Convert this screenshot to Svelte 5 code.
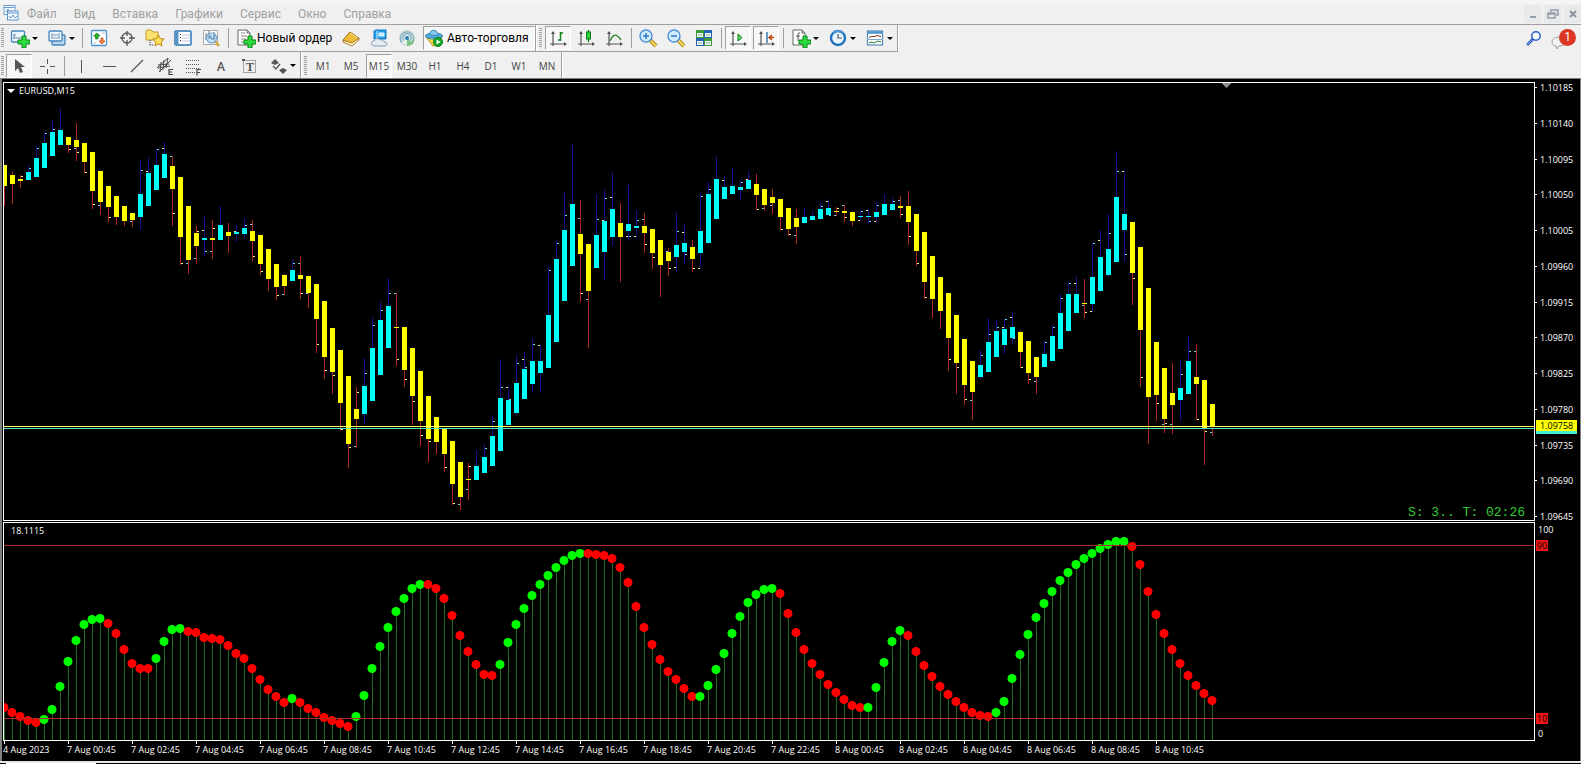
<script>
    const menu = ["Файл", "Вид", "Вставка", "Графики", "Сервис", "Окно", "Справка"];
    const timeframes = ["M1", "M5", "M15", "M30", "H1", "H4", "D1", "W1", "MN"];
    const prices = ["1.10185", "1.10140", "1.10095", "1.10050", "1.10005", "1.09960", "1.09915", "1.09870", "1.09825", "1.09780", "1.09735", "1.09690", "1.09645"];
    const times = [
        "4 Aug 2023", "7 Aug 00:45", "7 Aug 02:45", "7 Aug 04:45", "7 Aug 06:45", "7 Aug 08:45", "7 Aug 10:45",
        "7 Aug 12:45", "7 Aug 14:45", "7 Aug 16:45", "7 Aug 18:45", "7 Aug 20:45", "7 Aug 22:45", "8 Aug 00:45",
        "8 Aug 02:45", "8 Aug 04:45", "8 Aug 06:45", "8 Aug 08:45", "8 Aug 10:45"
    ];

    // distance between two bars
    const step = 8;

    // [up, high, body top, body bottom, low, open tick, close tick], 0 = no tick
    const candles = [
        [0,165,165,186,206,0,0],[0,171,175,184,204,0,0],[0,175,179,181,188,0,176],[1,165,172,180,180,0,168],
        [1,146,158,177,177,0,148],[1,132,143,168,168,0,133],[1,121,132,156,156,0,129],[1,108,130,145,145,0,0],
        [0,137,137,145,153,0,149],[0,123,140,147,161,148,152],[0,143,143,162,173,0,172],[0,152,152,191,209,0,204],
        [0,171,171,202,215,205,0],[0,186,186,207,222,0,217],[0,196,196,217,225,0,0],[0,206,206,221,226,0,0],
        [0,213,213,220,227,221,0],[1,160,194,217,230,0,170],[1,157,173,206,206,171,0],[1,149,165,190,190,0,149],
        [1,142,154,178,178,148,0],[0,156,166,189,226,156,213],[0,177,177,237,265,0,263],[0,206,206,260,274,263,0],
        [0,226,233,246,264,258,231],[1,217,238,240,256,230,251],[0,220,238,240,259,251,228],[1,206,225,240,240,0,0],
        [0,223,232,236,253,0,0],[1,225,232,234,242,231,0],[1,218,228,234,239,0,225],[0,220,231,241,261,224,256],
        [0,235,235,264,275,0,271],[0,249,249,279,291,0,0],[0,264,264,287,300,0,295],[0,274,275,286,295,294,0],
        [1,259,270,281,281,0,263],[0,256,275,279,299,263,293],[0,276,276,293,308,293,0],[0,284,284,319,353,0,344],
        [0,301,301,357,379,0,370],[0,328,328,372,394,0,375],[0,350,350,403,431,0,429],[0,376,376,444,468,0,447],
        [0,387,409,419,448,446,392],[1,358,386,414,424,0,373],[1,317,348,401,401,0,325],[1,301,320,375,375,0,310],
        [1,278,306,348,348,0,293],[0,293,327,328,366,293,359],[0,327,327,370,387,0,379],[0,348,348,396,425,0,401],
        [0,371,371,421,446,0,435],[0,396,396,439,462,0,441],[0,417,417,442,454,0,0],[0,429,429,454,472,0,467],
        [0,441,441,484,505,0,503],[0,462,462,497,510,504,0],[0,463,479,480,500,489,466],[1,450,466,480,480,0,0],
        [1,444,457,473,473,0,448],[1,415,436,466,466,0,421],[1,359,398,451,451,0,387],[1,387,400,425,425,387,399],
        [1,355,383,413,415,0,363],[1,352,369,399,399,359,367],[1,338,361,384,393,0,344],[1,345,361,373,393,345,0],
        [1,266,315,368,368,0,270],[1,241,259,342,342,0,243],[1,193,230,301,301,0,215],[1,145,204,266,266,0,0],
        [0,200,234,254,302,218,293],[0,244,244,291,348,299,0],[1,194,235,268,268,0,219],[1,189,221,252,280,220,198],
        [1,172,209,237,246,197,0],[0,203,223,237,282,0,0],[1,185,224,231,241,236,236],[1,210,226,228,237,236,220],
        [0,213,226,233,253,219,244],[0,229,229,253,269,0,257],[0,240,240,265,297,0,0],[0,248,252,261,276,251,268],
        [1,212,245,257,272,267,231],[1,225,243,252,264,232,254],[0,240,247,259,272,0,268],[1,193,231,253,268,268,196],
        [1,182,194,243,243,0,189],[1,156,179,219,219,0,0],[1,176,187,199,199,180,0],[1,168,186,194,194,0,0],
        [1,180,187,190,199,0,182],[1,171,180,189,189,179,0],[0,174,184,195,210,0,209],[0,189,189,205,211,208,0],
        [0,189,197,203,214,205,0],[0,199,199,217,230,0,229],[0,208,208,229,236,0,234],[0,209,218,227,244,235,0],
        [1,208,217,223,223,0,0],[1,211,216,220,220,0,0],[1,202,209,219,219,0,206],[1,199,208,215,215,201,215],
        [0,207,211,212,216,215,208],[0,205,211,213,222,205,217],[0,212,212,221,226,0,0],[1,210,216,217,221,220,211],
        [1,209,216,217,224,210,221],[1,202,212,217,222,221,205],[1,194,204,215,215,0,0],[1,197,204,210,210,0,201],
        [0,196,206,208,218,200,214],[0,191,206,222,245,0,236],[0,214,214,251,266,0,263],[0,232,232,282,299,0,297],
        [0,256,256,299,318,0,0],[0,277,277,311,329,0,0],[0,293,293,338,371,0,359],[0,315,315,363,394,0,367],
        [0,339,339,385,405,0,399],[0,361,361,392,420,400,0],[1,350,365,377,379,0,355],[1,318,342,372,372,0,334],
        [1,320,331,357,357,0,327],[1,319,329,345,354,327,319],[1,311,327,338,345,317,338],[0,331,332,352,368,0,367],
        [0,341,341,373,384,0,379],[0,357,357,377,394,381,0],[1,341,354,367,367,0,342],[1,325,336,361,361,0,327],
        [1,294,313,349,349,0,298],[1,282,294,331,331,0,283],[1,276,294,313,313,283,0],[0,279,303,304,318,305,312],
        [1,243,277,304,312,311,243],[1,230,257,291,291,240,0],[1,214,249,275,277,0,233],[1,151,197,262,262,0,171],
        [1,171,214,230,262,171,254],[0,222,222,273,305,0,278],[0,247,247,330,387,0,377],[0,288,288,397,444,0,0],
        [0,342,342,395,421,0,403],[0,368,368,419,433,424,423],[0,363,393,405,434,424,0],[1,360,388,400,421,0,374],
        [1,336,361,394,394,0,351],[0,344,377,384,420,351,419],[0,380,380,428,465,0,431],[0,404,404,426,436,432,0]
    ];

    const wave = [
        707,712,716,720,722,719,709,686,661,640,624,619,618,623,633,649,663,668,668,658,641,629,628,631,632,637,638,639,
        645,653,658,668,679,689,696,702,698,702,708,712,717,720,723,726,716,695,668,646,627,611,598,588,584,584,588,598,
        615,635,651,664,674,675,664,642,624,608,595,584,575,567,560,555,553,553,554,555,558,567,582,606,627,644,659,671,
        679,688,696,696,685,669,653,633,616,602,594,589,588,593,613,632,649,663,674,684,692,699,705,707,707,687,662,641,
        630,635,651,665,676,686,694,701,707,712,715,716,712,701,678,654,634,617,603,591,580,572,564,558,553,548,544,541,
        541,546,564,591,614,633,649,663,675,685,693,700
    ];
    const rising = [[5, 12], [19, 22], [36, 36], [44, 52], [62, 72], [87, 96], [108, 112], [124, 140]];
    const isRising = (i) => rising.some(([from, to]) => i >= from && i <= to);

    const axes = '<path d="M5 4v14M2 16h16" stroke="#555" stroke-width="1.2" fill="none"/><path d="M3 6l2-3 2 3zM16 14l3 2-3 2z" fill="#555"/>';
    const plus = '<path d="M12 8h4v4h4v4h-4v4h-4v-4H8v-4h4z" fill="#2edb3c" stroke="#08851a"/>';
    const lens = '<path d="M12 12l6 6" stroke="#b88a1c" stroke-width="4"/><path d="M12 12l6 6" stroke="#f6d765" stroke-width="2"/><circle cx="8" cy="8" r="6" fill="#d3edff" stroke="#4a8fd6" stroke-width="1.4"/>';
    const sheet = '<path d="M2 2h9l3 3v12H2z" fill="#fff" stroke="#666"/><path d="M11 2v3h3" fill="none" stroke="#666"/>';

    const icons = {
        app: '<rect x="3" y="1.500" width="11" height="9" fill="#f4faff" stroke="#6c9fd0"/><path d="M3 3.500h11M5 8l2-3 2 3 2-2" fill="none" stroke="#6c9fd0"/><rect x="6.500" y="7" width="10.500" height="9" fill="#f4faff" stroke="#5f94c9"/><path d="M6 9h11M8 12l2 2 2-3 2 3 2-2" fill="none" stroke="#5f94c9"/>',
        newChart: '<rect x="1.500" y="3" width="13" height="11" rx="1" fill="#eef7ff" stroke="#4687bd" stroke-width="1.300"/><path d="M4 6v5M3 10h9M4 7h2" stroke="#6a8aa8" fill="none"/>' + plus,
        profiles: '<rect x="5" y="7" width="13" height="10" rx="1" fill="#b9d8f0" stroke="#4687bd" stroke-width="1.300"/><rect x="2" y="3" width="13" height="10" rx="1" fill="#eef7ff" stroke="#4687bd" stroke-width="1.300"/><path d="M5 5v5M12 5v5M4 10h9M5 7h6" stroke="#7c9ab5" fill="none"/>',
        market: '<rect x="2.500" y="2.500" width="15" height="15" rx="1" fill="#fff" stroke="#4b95d1" stroke-width="1.300"/><path d="M8 5l3 3H9v3H6.500V8H4.500z" fill="#24b52d" stroke="#087a12" stroke-width=".7"/><path d="M13 16l3-3h-2v-3h-2v3h-2z" fill="#ff934c" stroke="#c84410" stroke-width=".8"/><path d="M13 5h3M4 15h3" stroke="#bbb"/>',
        target: '<circle cx="10" cy="10" r="5" fill="none" stroke="#555" stroke-width="1.300"/><path d="M10 3v5M10 12v6M3 10h5M12 10h6" stroke="#555" stroke-width="1.300"/>',
        navigator: '<path d="M1 3l1-1h4l2 2h5v8H1z" fill="#f9e26d" stroke="#c29b26"/><path d="M5 12v6M5 17h4" stroke="#333" stroke-dasharray="1 1"/><path d="M13.500 7l1.700 3.600 4 .5-3 2.800.8 4-3.500-2-3.600 2 .8-4-3-2.800 4-.5z" fill="#ffdf57" stroke="#b98918"/>',
        terminal: '<rect x="2" y="3" width="16" height="14" rx="1" fill="#fff" stroke="#2d74b2" stroke-width="1.500"/><path d="M4 3v14" stroke="#5795c8" stroke-width="3"/><path d="M9 7h8M9 10h8M9 13h8" stroke="#b8c5dd"/><path d="M7.500 6v9" stroke="#222" stroke-dasharray="1 2"/>',
        tester: '<path d="M2.500 2.500h14v14h-14z" fill="#fff" stroke="#a6a6a6"/><path d="M5 5v7M8 3v6M13 4v8" stroke="#666"/><path d="M14 13l4 5" stroke="#d8a73c" stroke-width="2.500"/><circle cx="10.500" cy="10" r="5" fill="#b8dcf6" fill-opacity=".8" stroke="#6f9fc8" stroke-width="1.200"/><path d="M8 11V8h2v3h3V7" stroke="#5380a8" fill="none"/>',
        order: sheet + '<path d="M5 5h4M5 8h6M5 11h5M5 14h3" stroke="#888"/>' + plus,
        book: '<path d="M2 12L9 4l9 6-7 7z" fill="#efbb3a" stroke="#94620e"/><path d="M2 12l9 3 7-5v2l-7 6-9-4z" fill="#fff0bd" stroke="#94620e" stroke-width=".8"/><path d="M9 5l8 5" stroke="#ffe694"/>',
        cloud: '<path d="M5 3l2-1h10v9H5z" fill="#20a3ef" stroke="#1173bd"/><path d="M8 3v8M10 5h5v3h-5z" fill="#c9edff" stroke="#e2f5ff"/><path d="M5 18c-4-1-3-5 0-5 1-3 5-3 6-1 4-1 4 1 4 2 4 0 4 4 0 4z" fill="#e5ebf3" stroke="#8797b4"/>',
        signal: '<circle cx="10" cy="10" r="7.500" fill="#e2eee7" stroke="#c2d0d3"/><path d="M5 14.500a6.500 6.500 0 1 1 10 0M7 12.500a4 4 0 1 1 6 0" stroke="#7aa8c0" stroke-width="1.200" fill="none"/><path d="M10 9v9c6 0 8-4 7-9a7 7 0 0 1-3 5z" fill="#7cc086"/><circle cx="10" cy="10" r="2" fill="#277eb7"/>',
        auto: '<path d="M2 9l7 9c4 0 8-4 9-9z" fill="#f4d748" stroke="#be991d"/><ellipse cx="10" cy="8" rx="8.500" ry="3" fill="#51a9d8" stroke="#3182ae"/><path d="M6 6c0-5 7-5 8 0 0 2-8 2-8 0z" fill="#86c9ec" stroke="#3a8ab5"/><circle cx="14" cy="14" r="4.500" fill="#16aa24" stroke="#078010"/><path d="M12.500 11.500v5l4-2.500z" fill="#fff"/>',
        bars: axes + '<path d="M12.500 4v9M13 5h2M10 12h2" stroke="#16831c" stroke-width="1.500" fill="none"/>',
        candles: axes + '<path d="M12.500 2v12" stroke="#087b13" stroke-width="1.300"/><rect x="10.500" y="4" width="4" height="7" fill="#2bd83a" stroke="#087b13"/>',
        line: axes + '<path d="M6 13c3-7 6-8 11-1" stroke="#2a8a30" stroke-width="1.300" fill="none"/>',
        zoomIn: lens + '<path d="M8 5v6M5 8h6" stroke="#2d7cc8" stroke-width="1.600"/>',
        zoomOut: lens + '<path d="M5 8h6" stroke="#2d7cc8" stroke-width="1.600"/>',
        tile: '<path d="M2 2h8v8H2zM10 10h8v8h-8z" fill="#3d9a35"/><path d="M10 2h8v8h-8zM2 10h8v8H2z" fill="#2562b4"/><path d="M3 5h6v4H3zM11 5h6v4h-6zM3 13h6v4H3zM11 13h6v4h-6z" fill="#f1f7ff"/><path d="M4 7h4M12 7h4M4 15h4M12 15h4" stroke="#8ab18f"/>',
        scroll: axes + '<path d="M10 6l4 3.500-4 3.500z" fill="#5be061" stroke="#0b7b15"/>',
        shift: axes + '<path d="M11 4v11" stroke="#1c68a8" stroke-width="1.300"/><path d="M18 9.500h-5M16 7l-3 2.500 3 2.500" stroke="#b5400e" stroke-width="1.300" fill="none"/>',
        indicators: sheet + '<path d="M9 5q-2-1-2 2v6M5 8h4" stroke="#555" fill="none"/>' + plus,
        clock: '<circle cx="10" cy="10" r="7" fill="#eaf6ff" stroke="#2474bd" stroke-width="2.400"/><path d="M10 6v4h4" stroke="#555" stroke-width="1.200" fill="none"/><path d="M5 5a7 7 0 0 1 10 0" stroke="#71b5ea" fill="none"/>',
        templates: '<rect x="2.500" y="3" width="15" height="14" fill="#fff" stroke="#5189b8" stroke-width="1.200"/><path d="M2 4.500h16" stroke="#4d94cf" stroke-width="2.500"/><path d="M4 9.500l3-1h3l2-1 4 1" stroke="#8a3226" fill="none"/><path d="M2 11.500h16" stroke="#83a9c8"/><path d="M4 15l3-1 2 1 4-2 3 1" stroke="#257e32" fill="none"/>',
        cursor: '<path d="M6 3v12l3-3 2 5 3-1-2-5h4z" fill="#555"/>',
        cross: '<path d="M10.500 3v5M10.500 13v5M3 10.500h5M13 10.500h5" stroke="#555"/>',
        vertical: '<path d="M10.500 4v13" stroke="#555"/>',
        horizontal: '<path d="M4 10.500h13" stroke="#555"/>',
        trend: '<path d="M4 16L16 4" stroke="#555" stroke-width="1.200"/>',
        channel: '<path d="M2 12L13 2M4 16L16 4M3 9l11-1M3 12l12-2M6 6L5 16M9 4L8 14M13 2l-2 10" stroke="#4d4d4d"/><path d="M18 13.500h-4v5h4M14 16h3" stroke="#444" stroke-width="1.200" fill="none"/>',
        fibo: '<path d="M3 4.500h14M3 8.500h14M3 12.500h14M3 16.500h9" stroke="#555" stroke-dasharray="1 1"/><path d="M18 13.500h-4v6M14 16.500h3" stroke="#444" stroke-width="1.200" fill="none"/>',
        letter: '<text x="6" y="15" font-family="Open Sans, sans-serif" font-size="12" font-weight="600" fill="#555">A</text>',
        label: '<rect x="4.500" y="4.500" width="12" height="12" fill="none" stroke="#555" stroke-dasharray="1 1"/><path d="M3 3h3v2H3z" fill="#555"/><text x="7" y="15" font-family="Liberation Serif, serif" font-size="12" font-weight="700" fill="#555">T</text>',
        arrows: '<path d="M3 7l4-4 4 4-4 2zM11 14l4-2 4 2-4 4zM3 10l3 3" fill="#555"/><path d="M5 10l3 3 4-5" stroke="#555" stroke-width="1.300" fill="none"/>',
        search: '<circle cx="12" cy="7" r="4.200" fill="#f6faff" stroke="#2c62c4" stroke-width="1.500"/><path d="M9 10l-6 6" stroke="#2455b6" stroke-width="2.600"/><path d="M8 11l-5 5" stroke="#8fb3f0"/>'
    };

    const chartTools = ["market", "target", "navigator", "terminal", "tester"];
    const drawTools = ["vertical", "horizontal", "trend", "channel", "fibo", "letter", "label"];
</script>

{#snippet icon(name)}
    <svg class="icon" width="20" height="20" viewBox="0 0 20 20" aria-hidden="true">{@html icons[name]}</svg>
{/snippet}

{#snippet tool(name, pressed = false)}
    <button class="tool" class:pressed aria-label={name}>{@render icon(name)}</button>
{/snippet}

{#snippet dropdown(name)}
    <button class="tool dropdown" aria-label={name}>{@render icon(name)}<span class="caret"></span></button>
{/snippet}

<div class="terminal">
    <header class="menu-bar">
        {@render icon("app")}
        <nav>
            {#each menu as item}
                <a href="#menu">{item}</a>
            {/each}
        </nav>
        <div class="window-buttons">
            <button aria-label="minimize"><svg width="12" height="12"><path d="M3 9h6" stroke="#929da8" stroke-width="2" /></svg></button>
            <button aria-label="restore"><svg width="12" height="12"><path d="M4 4V2h7v5H9M1 5h7v5H1zM1 6h7" stroke="#929da8" stroke-width="1.500" fill="none" /></svg></button>
            <button aria-label="close"><svg width="12" height="12"><path d="M3 3l6 6M9 3l-6 6" stroke="#8a949e" stroke-width="2" /></svg></button>
        </div>
    </header>

    <div class="toolbar">
        <div class="group lined">
            <span class="grip"></span>
            {@render dropdown("newChart")}
            {@render dropdown("profiles")}
            <span class="separator"></span>
            {#each chartTools as name}
                {@render tool(name)}
            {/each}
            <span class="separator"></span>
            <button class="tool text-tool">{@render icon("order")}<span>Новый ордер</span></button>
            {@render tool("book")}
            {@render tool("cloud")}
            {@render tool("signal")}
            <button class="tool text-tool pressed auto">{@render icon("auto")}<span>Авто-торговля</span></button>
        </div>
        <div class="group lined">
            <span class="grip"></span>
            {@render tool("bars", true)}
            {@render tool("candles")}
            {@render tool("line")}
            <span class="separator"></span>
            {@render tool("zoomIn")}
            {@render tool("zoomOut")}
            {@render tool("tile")}
            <span class="separator"></span>
            {@render tool("scroll", true)}
            {@render tool("shift", true)}
            <span class="separator"></span>
            {@render dropdown("indicators")}
            {@render dropdown("clock")}
            {@render dropdown("templates")}
        </div>
        <div class="corner">
            {@render tool("search")}
            <button class="tool chat" aria-label="messages">
                <svg width="24" height="24" viewBox="0 0 24 24">
                    <path d="M9 10c-5 0-7 3-7 5s2 4 4 4l1 3 2-3c5 0 7-2 7-5" fill="#f3f3f3" stroke="#9b9b9b" />
                </svg>
                <span class="badge">1</span>
            </button>
        </div>
    </div>

    <div class="toolbar drawing">
        <div class="group">
            <span class="grip"></span>
            {@render tool("cursor", true)}
            {@render tool("cross")}
            <span class="separator"></span>
            {#each drawTools as name}
                {@render tool(name)}
            {/each}
            {@render dropdown("arrows")}
        </div>
        <div class="group">
            <span class="grip"></span>
            {#each timeframes as name}
                <button class="tool timeframe" class:pressed={name === "M15"}>{name}</button>
            {/each}
        </div>
    </div>

    <main class="charts">
        <section class="panel">
            <svg class="plot" height="437" aria-label="EURUSD">
                <g transform="translate(0 -83)" shape-rendering="crispEdges">
                    {#each candles as [up, high, top, bottom, low, open, close], i}
                        <g class={up ? "up" : "down"} transform={`translate(${i * step} 0)`}>
                            <rect class="wick" x="0" y={high} width="1" height={low - high} />
                            <rect class="body" x="-2" y={top} width="5" height={bottom - top} />
                            {#if open}<rect class="open" x="-2" y={open} width="2" height="1" />{/if}
                            {#if close}<rect class="close" x="1" y={close} width="2" height="1" />{/if}
                        </g>
                    {/each}
                    <rect class="bid" x="0" y="426" width="100%" height="1" />
                    <rect class="ask" x="0" y="428" width="100%" height="1" />
                    <path d="M1217 83h10l-5 5z" fill="#8c8c8c" />
                </g>
            </svg>
            <div class="chart-title"><span class="caret light"></span>EURUSD,M15</div>
            <div class="spread">S: 3.. T: 02:26</div>
        </section>
        <aside class="axis price-axis">
            {#each prices as price}
                <span>{price}</span>
            {/each}
            <b class="current">1.09758</b>
        </aside>

        <section class="panel">
            <svg class="plot" height="217" aria-label="Oscillator">
                <g transform="translate(0 -523)">
                    {#each wave as y, i}
                        <rect class="stem" x={i * step} {y} width="1" height={740 - y} shape-rendering="crispEdges" />
                        <circle cx={i * step} cy={y + 0.5} r="4.5" fill={isRising(i) ? "#00ff00" : "#ff0000"} />
                    {/each}
                    <rect class="level" x="0" y="545" width="100%" height="1" />
                    <rect class="level" x="0" y="718" width="100%" height="1" />
                </g>
            </svg>
            <div class="chart-title">18.1115</div>
        </section>
        <aside class="axis level-axis">
            <span>100</span>
            <b class="upper">90</b>
            <b class="lower">10</b>
            <span>0</span>
        </aside>

        <div class="time-axis">
            {#each times as time}
                <span>{time}</span>
            {/each}
        </div>
    </main>
    <footer><span></span></footer>
</div>

<style>
    :global(body) {
        background: #000;
    }

    .terminal {
        min-width: 1240px;
        overflow: hidden;
        background: #f0f0f0;
        font-family: Roboto, "Noto Sans", sans-serif;
        font-size: 12px;
        color: #000;
    }

    button {
        margin: 0;
        padding: 0;
        border: 0;
        background: none;
        font: inherit;
        color: inherit;
    }

    .icon {
        flex: none;
        display: block;
    }

    /* menu */
    .menu-bar {
        display: flex;
        align-items: center;
        height: 24px;
        padding: 4px 0 0 1px;
        box-sizing: border-box;
        background: linear-gradient(#f4f4f4 4px, #f0f0f0 4px);
    }

    nav {
        display: flex;
        gap: 17px;
        flex: 1;
        padding-left: 6px;
    }

    nav a {
        color: #a0a0a0;
        text-decoration: none;
        line-height: 18px;
    }

    .window-buttons {
        display: flex;
        gap: 3px;
    }

    .window-buttons button {
        display: flex;
        align-items: center;
        justify-content: center;
        width: 17px;
        height: 18px;
        background: #e8e9ea;
    }

    /* toolbars */
    .toolbar {
        display: flex;
        height: 27px;
        box-sizing: border-box;
        border-top: 1px solid #a0a0a0;
    }

    .drawing {
        border-top-color: transparent;
    }

    .drawing .group {
        padding-top: 1px;
    }

    .group {
        display: flex;
        align-items: center;
        border-right: 1px solid #a0a0a0;
        box-shadow: 1px 0 #fff;
    }

    .group.lined {
        box-shadow: 0 1px #a0a0a0, 1px 0 #fff;
    }

    .grip {
        width: 3px;
        height: 20px;
        margin: 0 2px 0 3px;
        background: repeating-linear-gradient(#a0a0a0 0 1px, #f0f0f0 1px 2px);
    }

    .group:first-child .grip {
        margin: 0 1px;
    }

    .separator {
        width: 1px;
        height: 20px;
        margin: 0 2px 0 3px;
        background: #a0a0a0;
    }

    .tool {
        display: flex;
        align-items: center;
        justify-content: center;
        width: 28px;
        height: 24px;
    }

    .pressed {
        width: 26px;
        margin: 0 1px;
        box-sizing: border-box;
        border: 1px solid #fff;
        border-top-color: #a0a0a0;
        border-left-color: #a0a0a0;
        background: #f7f7f7;
    }

    .dropdown {
        width: 37px;
        gap: 2px;
    }

    .text-tool {
        justify-content: flex-start;
        width: 106px;
        gap: 1px;
        padding-left: 5px;
        box-sizing: border-box;
        white-space: nowrap;
    }

    .auto {
        width: 112px;
        margin: 0 0 0 2px;
        padding: 0;
        gap: 3px;
    }

    .timeframe {
        font-family: "Open Sans", "Noto Sans", sans-serif;
        font-size: 10px;
        color: #444;
    }

    .caret {
        border: 3px solid transparent;
        border-top-color: #000;
        border-bottom-width: 0;
    }

    .caret.light {
        border-width: 4px 4px 0;
        border-top-color: #fff;
    }

    .corner {
        display: flex;
        align-items: center;
        margin-left: auto;
        padding: 2px 5px 0 0;
    }

    .chat {
        position: relative;
    }

    .badge {
        position: absolute;
        top: 2px;
        right: 0;
        width: 17px;
        height: 17px;
        border-radius: 50%;
        background: #dc3522;
        color: #fff;
        line-height: 17px;
        text-align: center;
    }

    /* charts */
    .charts {
        display: grid;
        grid-template-columns: minmax(0, 1fr) 45px;
        row-gap: 1px;
        padding: 3px 0 0 1px;
        border: solid #808080;
        border-width: 1px 1px 0 2px;
        background: #000;
        color: #fff;
        font-family: "Open Sans", "Noto Sans", sans-serif;
        font-size: 9px;
        line-height: 12px;
    }

    .panel {
        position: relative;
        border: 1px solid #fff;
    }

    .plot {
        display: block;
        width: 100%;
    }

    .up .wick {
        fill: #12128c;
    }

    .down .wick {
        fill: #a8281c;
    }

    .up .body {
        fill: #00ffff;
    }

    .down .body {
        fill: #ffff00;
    }

    .up .close,
    .down .open {
        fill: #6ed4e8;
    }

    .up .open,
    .down .close {
        fill: #ffec80;
    }

    .bid {
        fill: #ffff60;
    }

    .ask {
        fill: #48e0c8;
    }

    .stem {
        fill: #1c6c1c;
    }

    .level {
        fill: #b02828;
    }

    .chart-title {
        position: absolute;
        top: 2px;
        left: 7px;
        display: flex;
        align-items: center;
        gap: 4px;
    }

    .chart-title .caret {
        margin-left: -4px;
    }

    .spread {
        position: absolute;
        right: 9px;
        bottom: 0;
        font-family: "Liberation Mono", monospace;
        font-size: 13px;
        line-height: 14px;
        color: #32cd32;
    }

    .axis {
        position: relative;
        display: flex;
        flex-direction: column;
        justify-content: space-between;
    }

    .axis span {
        padding-left: 5px;
    }

    .price-axis {
        margin-bottom: -2px;
    }

    .price-axis span {
        background: linear-gradient(#fff, #fff) 0 5px / 2px 1px no-repeat;
    }

    .axis b {
        position: absolute;
        left: 1px;
        color: #000;
        font-weight: 400;
    }

    .axis .current {
        top: 338px;
        width: 37px;
        padding-left: 4px;
        background: #ff0;
        line-height: 11px;
        border-bottom: 3px solid #40f0d8;
    }

    .level-axis {
        padding: 2px 0 1px;
    }

    .level-axis span {
        padding-left: 3px;
    }

    .level-axis b {
        width: 12px;
        background: #f01414;
        line-height: 11px;
        text-align: center;
    }

    .upper {
        top: 18px;
    }

    .lower {
        bottom: 17px;
    }

    .time-axis {
        grid-column: 1 / -1;
        display: flex;
        height: 20px;
        margin-top: -1px;
    }

    .time-axis span {
        flex: none;
        width: 64px;
        padding-top: 3px;
        box-sizing: border-box;
        white-space: nowrap;
        background: linear-gradient(#fff, #fff) 1px 0 / 1px 3px no-repeat;
    }

    footer {
        border-top: 2px solid #e8e8e8;
        background: #000;
    }

    footer span {
        display: block;
        width: 90px;
        height: 1px;
        margin-left: 6px;
        background: #fff;
    }
</style>
